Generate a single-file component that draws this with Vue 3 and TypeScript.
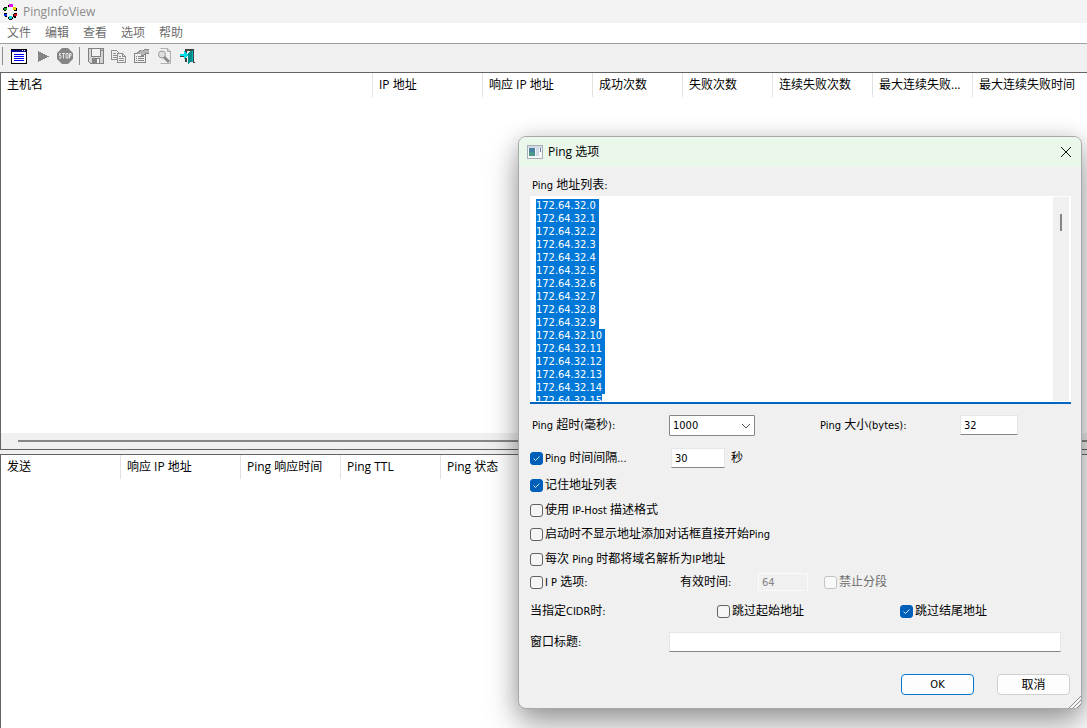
<script setup lang="ts">
import { h, onMounted, ref } from 'vue'
import type { FunctionalComponent } from 'vue'

interface Column {
  title: string
  width?: number
}

const menus = ['文件', '编辑', '查看', '选项', '帮助']

const hostColumns: Column[] = [
  { title: '主机名', width: 372 },
  { title: 'IP 地址', width: 110 },
  { title: '响应 IP 地址', width: 110 },
  { title: '成功次数', width: 90 },
  { title: '失败次数', width: 90 },
  { title: '连续失败次数', width: 100 },
  { title: '最大连续失败...', width: 100 },
  { title: '最大连续失败时间' },
]

const replyColumns: Column[] = [
  { title: '发送', width: 120 },
  { title: '响应 IP 地址', width: 120 },
  { title: 'Ping 响应时间', width: 100 },
  { title: 'Ping TTL', width: 100 },
  { title: 'Ping 状态' },
]

const addresses = ref(Array.from({ length: 16 }, (_, i) => `172.64.32.${i}`).join('\n'))
const timeout = ref('1000')
const size = ref('32')
const interval = ref('30')
const ttl = ref('64')
const windowTitle = ref('')

const useInterval = ref(true)
const remember = ref(true)
const hostFormat = ref(false)
const autoStart = ref(false)
const resolveEach = ref(false)
const ipOptions = ref(false)
const noFragment = ref(false)
const skipFirst = ref(false)
const skipLast = ref(true)

// Latin runs are set one size smaller than the Chinese text around them.
const Mixed: FunctionalComponent<{ text: string }> = (props) =>
  h(
    'span',
    { class: 'mixed' },
    (props.text.match(/[\x20-\x7e]+|[^\x20-\x7e]+/g) ?? []).map((run) =>
      /^[\x20-\x7e]/.test(run) ? h('span', { class: 'latin' }, run) : run,
    ),
  )
Mixed.props = ['text']

const list = ref<HTMLTextAreaElement | null>(null)
onMounted(() => {
  const el = list.value
  if (!el) return
  el.focus({ preventScroll: true })
  el.setSelectionRange(0, el.value.length, 'backward')
  el.scrollTop = 0
})
</script>

<template>
  <div class="app">
    <header class="titlebar">
      <svg class="logo" viewBox="0 0 16 16" aria-hidden="true">
        <path
          d="M7 0h3v1h1v2H6V1h1zM11 3h3v1h1v3h-3V6h-1zM12 9h3v3h-1v2h-2v-1h-1v-3h1zM7 12h3v1h1v2h-1v1H7v-1H6v-2h1zM2 9h3v4H3v-1H2zM2 3h3v3H4v1H2V6H1V4h1z"
          fill="#000"
        />
        <rect x="7" y="0" width="4" height="3" fill="#e010e0" />
        <rect x="11" y="3" width="3" height="3" fill="#e0d000" />
        <rect x="12" y="10" width="3" height="2" fill="#e01020" />
        <rect x="7" y="12" width="3" height="3" fill="#10d0d8" />
        <rect x="2" y="10" width="3" height="2" fill="#1030f0" />
        <rect x="2" y="4" width="3" height="2" fill="#10b028" />
      </svg>
      <span>PingInfoView</span>
    </header>

    <nav class="menubar">
      <button v-for="m in menus" :key="m" type="button">{{ m }}</button>
    </nav>

    <div class="toolbar">
      <span class="sep"></span>
      <button type="button" aria-label="Ping 选项">
        <svg viewBox="0 0 16 16">
          <rect y="1" width="16" height="15" fill="#000" />
          <rect y="2" width="15" height="2" fill="#000098" />
          <rect x="1" y="4" width="14" height="11" fill="#fff" />
          <path d="M11 2.500h1M13 2.500h1" stroke="#fff" />
          <path d="M3 6.500h10M3 8.500h10M3 10.500h10M3 12.500h10" stroke="#0000f0" />
        </svg>
      </button>
      <button type="button" aria-label="开始">
        <svg viewBox="0 0 16 16"><path d="M4 3v11l11-5.500z" fill="#848484" /></svg>
      </button>
      <button type="button" aria-label="停止">
        <svg class="smooth" viewBox="0 0 16 16">
          <path d="M5 0h6l5 5v6l-5 5H5l-5-5V5z" fill="#858585" />
          <path
            d="M4 5.500H2.500v2H4v2.500H2M5 5.500h3M6.500 5.500v5M9 5.500h2v4.500H9zM12.500 10.500v-5h1.500v2.500h-1.500"
            fill="none"
            stroke="#e4e4e4"
          />
        </svg>
      </button>
      <span class="sep mid"></span>
      <button type="button" aria-label="保存">
        <svg viewBox="0 0 16 16">
          <path d="M.5.5h15v15H2.500l-2-2z" fill="#d4d4d4" stroke="#808080" />
          <rect x="3.500" y=".5" width="9" height="8" fill="#f2f2f2" stroke="#808080" />
          <path d="M13 2h2" stroke="#808080" />
          <rect x="4" y="10" width="8" height="6" fill="#858585" />
          <rect x="9" y="11" width="2" height="4" fill="#f2f2f2" />
        </svg>
      </button>
      <button type="button" aria-label="复制">
        <svg viewBox="0 0 16 16">
          <path d="M.5 2.500h5l3 3v6h-8z" fill="#efefef" stroke="#909090" />
          <path d="M2 5.500h3M2 7.500h4M2 9.500h4" stroke="#909090" />
          <path d="M6.500 5.500h5l3 3v6h-8z" fill="#efefef" stroke="#909090" />
          <path d="M11.500 5.500v3h3M8 8.500h2M8 10.500h5M8 12.500h5" fill="none" stroke="#909090" />
        </svg>
      </button>
      <button type="button" aria-label="属性">
        <svg viewBox="0 0 16 16">
          <path d="M.5 5.500h11v9H.5z" fill="#efefef" stroke="#858585" />
          <path d="M2 8.500h1M4 8.500h6M2 10.500h1M4 10.500h6M2 12.500h1M4 12.500h6" stroke="#858585" />
          <path d="M3 6V4l3-2h3l2-1h4v5h-3l-3 2H7V6z" fill="#b4b4b4" />
          <path d="M3 5.500l4-3M9 2.500l2-1h4M7 7.500h2l3-2h3" fill="none" stroke="#858585" />
        </svg>
      </button>
      <button type="button" aria-label="查找">
        <svg class="smooth" viewBox="0 0 16 16">
          <path d="M3.500 .5h7l3 3v12h-10" fill="#efefef" stroke="#b0b0b0" />
          <path d="M10.500 .5v3h3" fill="none" stroke="#a8a8a8" />
          <circle cx="5" cy="6.500" r="3.500" fill="#dedede" stroke="#9a9a9a" />
          <path d="M7 9l5 5" stroke="#8b8b8b" stroke-width="3" />
        </svg>
      </button>
      <button type="button" aria-label="退出">
        <svg viewBox="0 0 16 16">
          <path d="M5 1h9v14h-1V3H7v2H5zM5 10h2v4H5z" fill="#404040" />
          <path d="M8 5l5-3v11l-5 3z" fill="#008c8c" />
          <path d="M12.500 3v11" stroke="#00b8b8" />
          <path d="M0 6h4V3l4 4-4 4V8H0z" fill="#00dce8" />
          <path d="M13 14.500h2M0 8.500h4" stroke="#404040" />
        </svg>
      </button>
    </div>

    <main class="panes">
      <section class="pane upper">
        <table>
          <colgroup>
            <col v-for="c in hostColumns" :key="c.title" :style="c.width ? { width: c.width + 'px' } : {}" />
          </colgroup>
          <thead>
            <tr><th v-for="c in hostColumns" :key="c.title" scope="col">{{ c.title }}</th></tr>
          </thead>
        </table>
        <div class="hscroll"><span></span></div>
      </section>
      <section class="pane lower">
        <table>
          <colgroup>
            <col v-for="c in replyColumns" :key="c.title" :style="c.width ? { width: c.width + 'px' } : {}" />
          </colgroup>
          <thead>
            <tr><th v-for="c in replyColumns" :key="c.title" scope="col">{{ c.title }}</th></tr>
          </thead>
        </table>
      </section>
    </main>

    <form class="dialog" role="dialog" aria-labelledby="dialog-title" @submit.prevent>
      <div class="dialog-head">
        <svg viewBox="0 0 16 14" aria-hidden="true">
          <rect x=".5" y=".5" width="15" height="13" fill="#f5f7f8" stroke="#a9b0b8" />
          <rect x="1" y="1" width="14" height="2" fill="#d5dbe2" />
          <rect x="2" y="3" width="6" height="8" fill="#4b81a0" />
          <rect x="2" y="7" width="5" height="4" fill="#4c9a86" />
          <rect x="9" y="3" width="3" height="8" fill="#d6dce6" />
          <rect x="13" y="3" width="1" height="4" fill="#6084b0" />
        </svg>
        <h1 id="dialog-title">Ping 选项</h1>
        <button type="button" class="close" aria-label="关闭">
          <svg viewBox="0 0 12 12"><path d="M1 1l10 10M11 1L1 11" stroke="#111" stroke-width="1" /></svg>
        </button>
      </div>

      <div class="dialog-body">
        <label class="list-label" for="addresses"><Mixed text="Ping 地址列表:" /></label>
        <div class="list-box">
          <textarea id="addresses" ref="list" v-model="addresses" spellcheck="false"></textarea>
          <div class="vscroll"><span></span></div>
        </div>

        <div class="rows">
          <div class="row timing">
            <label class="inset" for="timeout"><Mixed text="Ping 超时(毫秒):" /></label>
            <div class="select">
              <select id="timeout" v-model="timeout">
                <option>1000</option>
              </select>
              <svg viewBox="0 0 10 6" aria-hidden="true">
                <path d="M1 1l4 4 4-4" fill="none" stroke="#555" />
              </svg>
            </div>
            <label for="size"><Mixed text="Ping 大小(bytes):" /></label>
            <input id="size" v-model="size" class="field w58" type="text" />
          </div>

          <div class="row interval">
            <label class="check"><input v-model="useInterval" type="checkbox" /><Mixed text="Ping 时间间隔..." /></label>
            <input id="interval" v-model="interval" class="field w54" type="text" aria-label="Ping 时间间隔" />
            <label for="interval">秒</label>
          </div>

          <div class="row">
            <label class="check"><input v-model="remember" type="checkbox" /><Mixed text="记住地址列表" /></label>
          </div>
          <div class="row">
            <label class="check"><input v-model="hostFormat" type="checkbox" /><Mixed text="使用 IP-Host 描述格式" /></label>
          </div>
          <div class="row">
            <label class="check"><input v-model="autoStart" type="checkbox" /><Mixed text="启动时不显示地址添加对话框直接开始Ping" /></label>
          </div>
          <div class="row">
            <label class="check"><input v-model="resolveEach" type="checkbox" /><Mixed text="每次 Ping 时都将域名解析为IP地址" /></label>
          </div>

          <div class="row ip">
            <label class="check"><input v-model="ipOptions" type="checkbox" /><Mixed text="I P 选项:" /></label>
            <label for="ttl"><Mixed text="有效时间:" /></label>
            <input id="ttl" v-model="ttl" class="field w50" type="text" disabled />
            <label class="check off"><input v-model="noFragment" type="checkbox" disabled /><Mixed text="禁止分段" /></label>
          </div>

          <div class="row cidr">
            <span><Mixed text="当指定CIDR时:" /></span>
            <label class="check"><input v-model="skipFirst" type="checkbox" /><Mixed text="跳过起始地址" /></label>
            <label class="check"><input v-model="skipLast" type="checkbox" /><Mixed text="跳过结尾地址" /></label>
          </div>

          <div class="row caption">
            <label for="window-title"><Mixed text="窗口标题:" /></label>
            <input id="window-title" v-model="windowTitle" class="field" type="text" />
          </div>
        </div>

        <div class="actions">
          <button type="submit" class="primary">OK</button>
          <button type="button">取消</button>
        </div>
      </div>
      <svg class="grip" viewBox="0 0 12 12" aria-hidden="true">
        <path d="M0 12L12 0M4 12l8-8M8 12l4-4" stroke="#8c8c8c" />
        <path d="M2 12L12 2M6 12l6-6" stroke="#fff" />
      </svg>
    </form>
  </div>
</template>

<style>
body {
  margin: 0;
  overflow: hidden;
}
.mixed {
  white-space: pre;
}
.mixed .latin {
  font-family: 'DejaVu Sans Condensed', 'Open Sans', sans-serif;
  font-size: 11px;
}
</style>

<style scoped>
.app {
  position: relative;
  display: flex;
  flex-direction: column;
  height: 100vh;
  overflow: hidden;
  background: #f0f0f0;
  color: #000;
  font: 12px/16px 'Open Sans', 'Noto Sans CJK SC', sans-serif;
}
button,
input,
select,
textarea {
  box-sizing: border-box;
  margin: 0;
  padding: 0;
  border: 0;
  color: inherit;
  font: inherit;
}
button {
  background: none;
}
.titlebar {
  display: flex;
  align-items: center;
  gap: 5px;
  height: 23px;
  padding-left: 2px;
  background: #f3f3f3;
  color: #8b8b8b;
}
.logo {
  width: 16px;
  height: 16px;
  shape-rendering: crispEdges;
}
.menubar {
  display: flex;
  gap: 14px;
  height: 20px;
  padding-left: 7px;
  border-bottom: 1px solid #a0a0a0;
  background: #fff;
  color: #6d6d6d;
}
.menubar button {
  width: 24px;
  white-space: nowrap;
}
.toolbar {
  display: flex;
  align-items: center;
  height: 24px;
  padding-bottom: 4px;
  padding-left: 2px;
}
.toolbar .sep {
  width: 1px;
  height: 18px;
  margin-right: 4px;
  background: #8c8c8c;
}
.toolbar .sep.mid {
  margin: 0 4px 0 3px;
}
.toolbar button {
  display: grid;
  place-items: center;
  width: 23px;
  height: 22px;
}
.toolbar svg {
  width: 16px;
  height: 16px;
  shape-rendering: crispEdges;
}
.toolbar svg.smooth {
  shape-rendering: auto;
}
.panes {
  display: flex;
  flex: 1;
  flex-direction: column;
  gap: 4px;
  min-height: 0;
}
.pane {
  display: flex;
  flex-direction: column;
  border: solid #646464;
  border-width: 1px 0 0 1px;
  background: #fff;
}
.upper {
  flex: 11 1 0;
  border-bottom-width: 1px;
}
.lower {
  flex: 8 1 0;
}
table {
  width: 100%;
  border-spacing: 0;
  table-layout: fixed;
}
th {
  box-sizing: border-box;
  height: 24px;
  padding: 0 0 0 6px;
  border-right: 1px solid #e2e2e2;
  font-weight: 400;
  text-align: left;
  white-space: nowrap;
}
th:last-child {
  border-right: 0;
}
.hscroll {
  display: flex;
  align-items: center;
  height: 16px;
  margin-top: auto;
  padding-left: 17px;
  background: #f0f0f0;
}
.hscroll span {
  flex: 1;
  height: 2px;
  background: #858885;
}

.dialog {
  position: absolute;
  top: 136px;
  right: 5px;
  box-sizing: border-box;
  width: 564px;
  overflow: visible;
  border: 1px solid #a9a9a9;
  border-radius: 8px;
  background: #f0f0f0;
  box-shadow: 0 16px 32px rgba(0, 0, 0, 0.34), 0 2px 20px rgba(0, 0, 0, 0.16);
  color: #000;
}
.dialog-head {
  display: flex;
  align-items: center;
  height: 30px;
  padding: 0 9px 0 8px;
  border-radius: 7px 7px 0 0;
  background: #e9f8ea;
}
.dialog-head > svg {
  width: 16px;
  height: 14px;
}
.dialog-head h1 {
  flex: 1;
  margin: 0 0 0 5px;
  font-size: 12px;
  font-weight: 400;
}
.close {
  display: grid;
  place-items: center;
  width: 12px;
  height: 20px;
}
.close svg {
  width: 12px;
  height: 12px;
}
.dialog-body {
  padding: 9px 10px 13px 11px;
}
.list-label {
  display: block;
  height: 20px;
  padding-left: 2px;
  line-height: 18px;
}
.list-box {
  display: flex;
  height: 206px;
  border-bottom: 2px solid #0067c0;
  background: #fff;
}
textarea {
  flex: 1;
  height: 203px;
  margin: 2px 0 1px;
  padding: 1px 6px 0;
  outline: 0;
  overflow: hidden;
  background: #fff;
  font: 11px/13px 'DejaVu Sans Condensed', 'Open Sans', sans-serif;
  resize: none;
}
textarea::selection {
  background: #0078d7;
  color: #fff;
}
.vscroll {
  width: 16px;
  margin: 1px 2px 1px 0;
  background: #f0f0f0;
}
.vscroll span {
  display: block;
  width: 2px;
  height: 17px;
  margin: 17px 0 0 7px;
  background: #858585;
}
.rows {
  display: grid;
  grid-template-rows: 42px 24px 30px 20px 28px 22px 24px 34px 28px;
}
.row {
  display: grid;
  align-items: center;
  white-space: nowrap;
}
.timing {
  grid-template-columns: 139px 151px 140px 1fr;
}
.interval {
  grid-template-columns: 141px 60px 1fr;
}
.ip {
  grid-template-columns: 150px 78px 66px 1fr;
}
.cidr {
  grid-template-columns: 187px 183px 1fr;
}
.caption {
  grid-template-columns: 139px 1fr;
  padding-right: 10px;
}
.inset {
  padding-left: 2px;
}
.check {
  display: flex;
  align-items: center;
  gap: 2px;
}
.check input {
  flex: none;
  width: 13px;
  height: 13px;
  border: 1px solid #626262;
  border-radius: 3px;
  appearance: none;
  background: #f5f5f5;
}
.check input:checked {
  border-color: #005fb8;
  background: #005fb8
    url("data:image/svg+xml,%3Csvg xmlns='http://www.w3.org/2000/svg' viewBox='0 0 11 11'%3E%3Cpath d='M2.500 5.500l2 2 4-4' fill='none' stroke='%23d7e8f8'/%3E%3C/svg%3E")
    center / 11px 11px no-repeat;
}
.off {
  color: #6d6d6d;
}
.check input:disabled {
  border-color: #c3c3c3;
  background: #f9f9f9;
}
.field {
  width: 100%;
  height: 20px;
  padding: 0 3px;
  border: 1px solid #e6e6e6;
  border-bottom-color: #868686;
  background: #fff;
  font: 11px/16px 'DejaVu Sans Condensed', 'Open Sans', sans-serif;
}
.field:disabled {
  height: 18px;
  border-color: #fafafa;
  background: #f0f0f0;
  color: #838383;
}
.w50 {
  width: 50px;
}
.w54 {
  width: 54px;
}
.w58 {
  width: 58px;
}
.select {
  position: relative;
  width: 86px;
  height: 21px;
}
.select select {
  display: block;
  width: 86px;
  height: 21px;
  padding: 1px 3px 0;
  border: 1px solid #868686;
  border-radius: 1px;
  appearance: none;
  background: #fff;
  font: 11px/16px 'DejaVu Sans Condensed', 'Open Sans', sans-serif;
}
.select svg {
  position: absolute;
  top: 8px;
  right: 4px;
  width: 10px;
  height: 6px;
  pointer-events: none;
}
.actions {
  display: flex;
  gap: 23px;
  justify-content: flex-end;
  padding: 18px 1px 0 0;
}
.actions button {
  width: 73px;
  height: 21px;
  border: 1px solid #d0d0d0;
  border-radius: 4px;
  background: #fdfdfd;
}
.actions .primary {
  border-color: #0078d4;
  font: 11px/16px 'DejaVu Sans Condensed', 'Open Sans', sans-serif;
}
.grip {
  position: absolute;
  right: 0;
  bottom: 0;
  width: 12px;
  height: 12px;
}
</style>
